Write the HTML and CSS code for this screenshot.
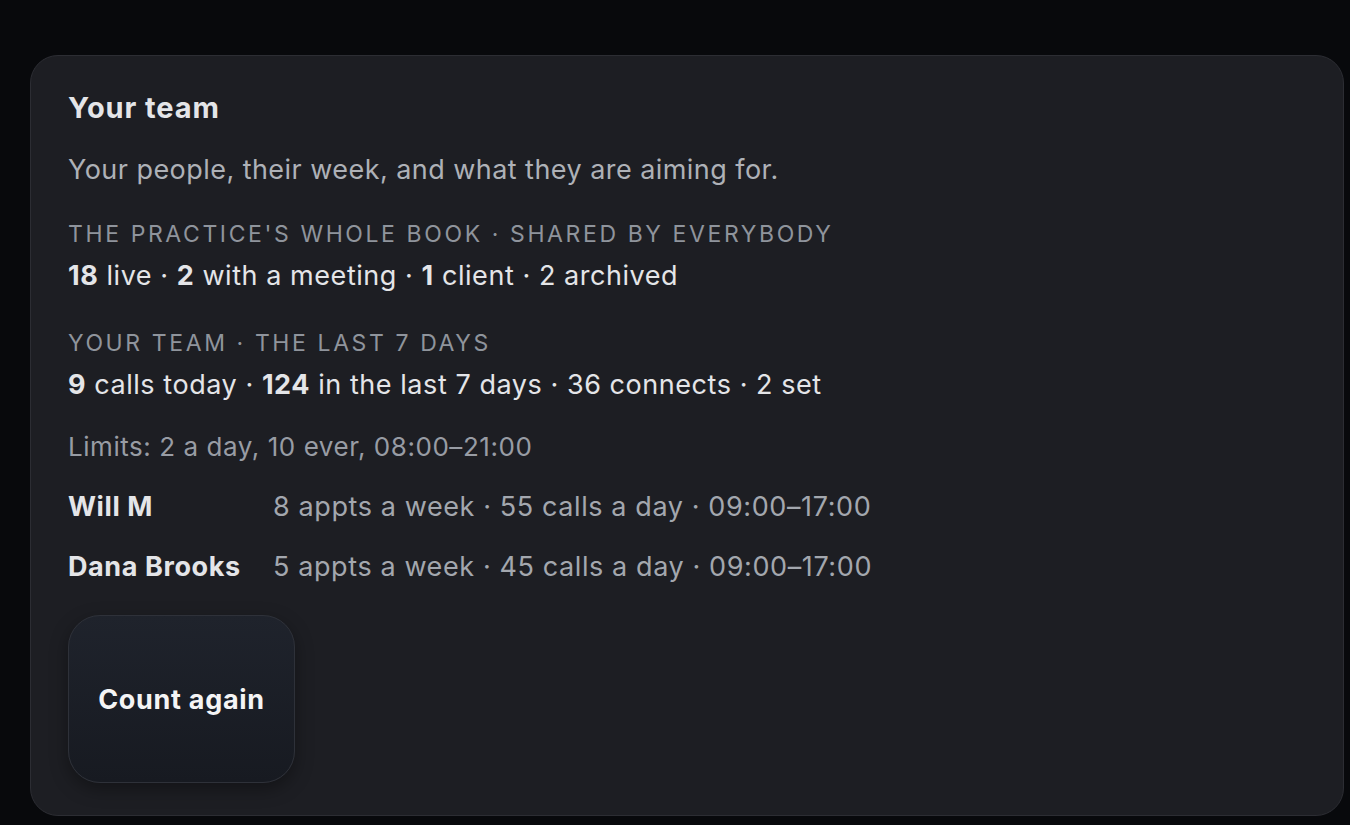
FILE: index.html
```html
<!DOCTYPE html>
<html lang="en">
<head>
    <meta charset="UTF-8">
    <meta name="viewport" content="width=device-width, initial-scale=1.0">
    <title>Your team</title>
    <link rel="stylesheet" href="styles.css">
</head>
<body>
    <div class="card">
        <h2 class="title">Your team</h2>
        <p class="subtitle">Your people, their week, and what they are aiming for.</p>

        <!-- whole book -->
        <div class="group">
            <div class="label">The practice's whole book · Shared by everybody</div>
            <div class="stats"><b>18</b> live · <b>2</b> with a meeting · <b>1</b> client · 2 archived</div>
        </div>

        <!-- team week -->
        <div class="group">
            <div class="label">Your team · The last 7 days</div>
            <div class="stats"><b>9</b> calls today · <b>124</b> in the last 7 days · 36 connects · 2 set</div>
        </div>

        <p class="limits">Limits: 2 a day, 10 ever, 08:00–21:00</p>

        <div class="people">
            <div class="person">
                <span class="name">Will M</span>
                <span class="goals">8 appts a week · 55 calls a day · 09:00–17:00</span>
            </div>
            <div class="person">
                <span class="name">Dana Brooks</span>
                <span class="goals">5 appts a week · 45 calls a day · 09:00–17:00</span>
            </div>
        </div>

        <button class="count-btn">Count again</button>
    </div>
</body>
</html>
```

FILE: styles.css
```css
:root {
    --page: #08090c;
    --card: #1d1e23;
    --line: #2c2d33;
    --text: #e4e5e8;
    --muted: #aeb1b7;
    --dim: #8f949c;
}

* {
    box-sizing: border-box;
}

body {
    margin: 0;
    background: var(--page);
    font-family: Inter, "Liberation Sans", sans-serif;
    color: var(--text);
}

.card {
    margin: 55px 6px 0 30px;
    padding: 35px 37px 32px;
    background: var(--card);
    border: 1px solid var(--line);
    border-radius: 28px;
}

.title {
    margin: 0;
    font-size: 29px;
    line-height: 34px;
    font-weight: 700;
    letter-spacing: 0.9px;
}

.subtitle {
    margin: 28px 0 0;
    font-size: 27px;
    line-height: 34px;
    letter-spacing: 0.45px;
    color: var(--muted);
}

.group {
    margin-top: 33px;
}

.group + .group {
    margin-top: 36px;
}

.label {
    font-size: 23px;
    line-height: 28px;
    text-transform: uppercase;
    letter-spacing: 2.6px;
    color: var(--dim);
}

.stats {
    margin-top: 11px;
    font-size: 27px;
    line-height: 34px;
    letter-spacing: 0.55px;
}

.stats b {
    font-weight: 700;
}

.limits {
    margin: 30px 0 0;
    font-size: 26px;
    line-height: 30px;
    letter-spacing: 0.55px;
    color: #989ca4;
}

.people {
    margin-top: 28px;
    display: flex;
    flex-direction: column;
    gap: 26px;
}

.person {
    display: grid;
    grid-template-columns: 205px 1fr;
    font-size: 27px;
    line-height: 34px;
    letter-spacing: 0.6px;
}

.name {
    font-weight: 700;
}

.goals {
    color: #a3a7ae;
}

.count-btn {
    display: block;
    margin-top: 31px;
    width: 227px;
    height: 168px;
    border: 1px solid #2e3139;
    border-radius: 32px;
    background: linear-gradient(180deg, #1f232c 0%, #171a21 100%);
    box-shadow: 0 6px 18px rgba(0, 0, 0, 0.35);
    color: #f4f4f5;
    font-family: Inter, "Liberation Sans", sans-serif;
    font-size: 27px;
    font-weight: 700;
    letter-spacing: 0.7px;
    cursor: pointer;
}
```
